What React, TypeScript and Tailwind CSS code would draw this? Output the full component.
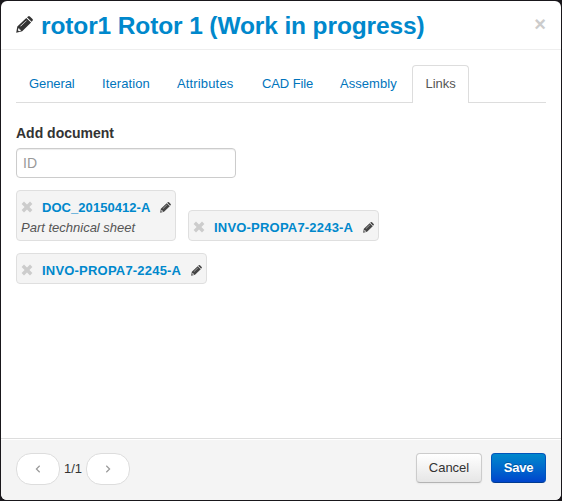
const tabs = [
  { name: "General", width: "w-[71px]", tracking: "tracking-[-0.1px]" },
  { name: "Iteration", width: "w-[73px]", tracking: "tracking-[0.1px]" },
  { name: "Attributes", width: "w-[83px]", tracking: "tracking-[0.15px]" },
  { name: "CAD File", width: "w-[76px]", tracking: "tracking-[-0.1px]" },
  { name: "Assembly", width: "w-[83px]", tracking: "tracking-[0.05px]" },
];

function Pencil({ className }: { className: string }) {
  return (
    <svg viewBox="0 0 17 18" preserveAspectRatio="none" className={className} fill="currentColor">
      <path
        fillRule="evenodd"
        d="M10.3 2 15.1 6.8 6.2 16.1.2 17.7 1.3 11.2zM2.4 13 1.9 15l1.1 1.1 1.9-.5-.3-1-1.1-.3-.2-1.1zM10.3 4.7 4.3 10.7l.4.4 6-6z"
      />
      <path d="M11 1.4 12.1.4Q13-.3 13.9.5l2.6 2.7q.8.9 0 1.7l-.9 1.1z" />
    </svg>
  );
}

function Cross({ className }: { className: string }) {
  return (
    <svg viewBox="0 0 12 12" className={className} fill="currentColor">
      <path d="M3 .6 6 3.6 9 .6 11.4 3 8.4 6l3 3L9 11.4l-3-3-3 3L.6 9l3-3-3-3z" />
    </svg>
  );
}

function LinkedDocument({ id, title, className, tracking }: { id: string; title?: string; className: string; tracking: string }) {
  return (
    <div className={`rounded border border-[#dfdfdf] bg-[#f4f4f4] px-1 pt-[6px] ${className}`}>
      <div className="flex h-5 items-center">
        <Cross className="h-[12px] w-[12px] shrink-0 text-[#cccccc]" />
        <a className={`ml-[9px] flex-1 whitespace-nowrap pt-px text-[13px] font-bold text-[#0088cc] ${tracking}`}>{id}</a>
        <Pencil className="mt-px h-[11px] w-[11px] shrink-0 text-[#444]" />
      </div>
      {title && <div className="h-5 whitespace-nowrap pt-px italic leading-5 text-[#555]">{title}</div>}
    </div>
  );
}

export default function App() {
  return (
    <div className="h-[501px] w-[562px] bg-[#19171b] p-px font-['Liberation_Sans',Arial,sans-serif] text-[13px] leading-5 text-[#333]">
      <div className="flex h-[499px] w-[560px] flex-col overflow-hidden rounded-md bg-white">
        <header className="flex h-[49px] shrink-0 items-center border-b border-[#eee] px-[15px]">
          <Pencil className="mb-px h-[17px] w-[17px] shrink-0 text-[#333]" />
          <h3 className="ml-2 flex-1 whitespace-nowrap pt-px text-[24.5px] font-bold leading-[30px] tracking-[-0.12px] text-[#0088cc]">
            rotor1 Rotor 1 (Work in progress)
          </h3>
          <button className="mb-[2px] text-[20px] font-bold leading-5 text-[#ccc]">×</button>
        </header>
        <main className="flex-1 px-[15px] pt-[15px]">
          <nav className="flex h-[38px] gap-[2px] border-b border-[#ddd]">
            {tabs.map((tab) => (
              <a key={tab.name} className={`h-[37px] whitespace-nowrap pl-[13px] pt-[9px] text-[#0074bc] ${tab.width} ${tab.tracking}`}>
                {tab.name}
              </a>
            ))}
            <a className="h-[38px] w-[57px] rounded-t border border-b-0 border-[#ddd] bg-white pl-[12.5px] pt-2 text-[#555]">Links</a>
          </nav>
          <label className="mt-[20px] block text-[14px] font-bold leading-5">Add document</label>
          <input
            placeholder="ID"
            className="mt-[5px] block h-[30px] w-[220px] rounded border border-[#ccc] bg-white px-[6px] text-[14px] shadow-[inset_0_1px_1px_rgba(0,0,0,0.075)] outline-none placeholder:text-[#999]"
          />
          <div className="mt-3 flex flex-wrap items-end gap-3">
            <LinkedDocument id="DOC_20150412-A" title="Part technical sheet" tracking="tracking-[0.05px]" className="h-[51px] w-[160px]" />
            <LinkedDocument id="INVO-PROPA7-2243-A" tracking="tracking-[0.2px]" className="h-[31px] w-[191px]" />
            <LinkedDocument id="INVO-PROPA7-2245-A" tracking="tracking-[0.2px]" className="h-[31px] w-[191px]" />
          </div>
        </main>
        <footer className="flex h-[62px] shrink-0 items-center border-t border-[#ddd] bg-[#f4f4f4] px-[15px] pb-[2px] shadow-[inset_0_1px_0_#fff]">
          <button className="flex h-8 w-11 items-center justify-center rounded-[15px] border border-[#ddd] bg-white text-[#999]">
            <svg viewBox="0 0 6 8" className="h-2 w-[6px]" fill="none" stroke="currentColor" strokeWidth="1.2"><path d="M4.7.8 1.4 4l3.3 3.2" /></svg>
          </button>
          <span className="w-[26px] text-center text-[13px]">1/1</span>
          <button className="flex h-8 w-11 items-center justify-center rounded-[15px] border border-[#ddd] bg-white text-[#999]">
            <svg viewBox="0 0 6 8" className="h-2 w-[6px]" fill="none" stroke="currentColor" strokeWidth="1.2"><path d="m1.3.8 3.3 3.2-3.3 3.2" /></svg>
          </button>
          <button className="mb-px ml-auto h-[30px] w-[66px] rounded border border-[#ccc] border-b-[#b3b3b3] bg-linear-to-b from-white to-[#e6e6e6] pb-px text-[13px] shadow-[0_1px_2px_rgba(0,0,0,0.05)]">Cancel</button>
          <button className="mb-px ml-[9px] h-[30px] w-[55px] rounded border border-[#0055bb] border-b-[#003b91] bg-linear-to-b from-[#0088cc] to-[#0044cc] pb-px text-[13px] font-bold tracking-[-0.2px] text-white [text-shadow:0_-1px_0_rgba(0,0,0,0.25)]">Save</button>
        </footer>
      </div>
    </div>
  );
}
